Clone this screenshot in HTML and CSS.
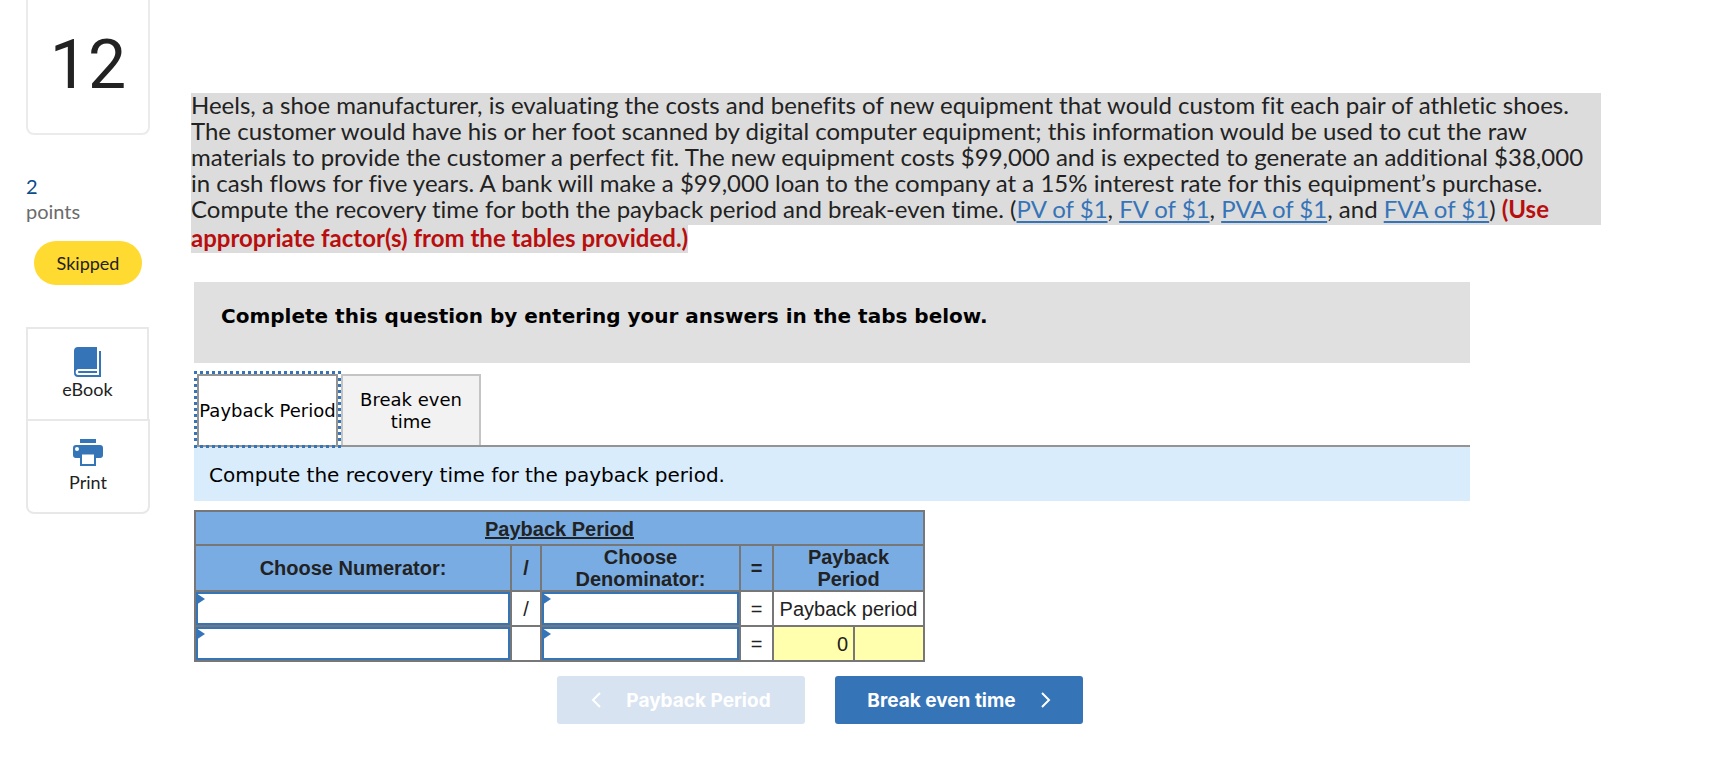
FILE: index.html
```
<!DOCTYPE html>
<html lang="en">
<head>
  <meta charset="UTF-8">
  <meta name="viewport" content="width=device-width, initial-scale=1.0">
  <title>Question 12</title>
  <link rel="stylesheet" href="styles.css">
</head>
<body>
  <div class="page">

    <!-- Sidebar -->
    <aside class="sidebar">
      <div class="question-number">12</div>
      <div class="points"><span class="points-value">2</span><span>points</span></div>
      <div class="status">Skipped</div>
      <div class="tools">
        <button type="button" class="tool tool-ebook">
          <svg width="28" height="30" viewBox="0 0 28 30" aria-hidden="true">
            <path fill="#3674b8" d="M4 0H23V22H5C3.500 22 2.500 22.600 2 23.500 1.600 24.200 1.600 26.300 2.200 27 2.800 27.800 3.500 28 5 28H25V4H27V30H4C1.500 30 0 28.500 0 26V4C0 1.500 1.500 0 4 0Z"/>
            <path fill="#3674b8" d="M5 24H23V26H5C3.600 26 3.600 24 5 24Z"/>
          </svg>
          <span>eBook</span>
        </button>
        <button type="button" class="tool tool-print">
          <svg width="30" height="27" viewBox="0 0 30 27" aria-hidden="true">
            <path fill="#3674b8" d="M7 0H23V4H7ZM3 6H27C29 6 30 7 30 9V16C30 18 29 19 27 19H23V27H7V19H3C1 19 0 18 0 16V9C0 7 1 6 3 6Z"/>
            <path fill="#fff" d="M9 15.500H21V25H9Z"/>
            <circle fill="#fff" cx="4" cy="10" r="2"/>
          </svg>
          <span>Print</span>
        </button>
      </div>
    </aside>

    <main class="content">
      <!-- Question text, selected -->
      <div class="question">
        <span class="line">Heels, a shoe manufacturer, is evaluating the costs and benefits of new equipment that would custom fit each pair of athletic shoes.</span>
        <span class="line">The customer would have his or her foot scanned by digital computer equipment; this information would be used to cut the raw</span>
        <span class="line">materials to provide the customer a perfect fit. The new equipment costs $99,000 and is expected to generate an additional $38,000</span>
        <span class="line">in cash flows for five years. A bank will make a $99,000 loan to the company at a 15% interest rate for this equipment’s purchase.</span>
        <span class="line line-links">Compute the recovery time for both the payback period and break-even time. (<a href="#">PV of $1</a>, <a href="#">FV of $1</a>, <a href="#">PVA of $1</a>, and <a href="#">FVA of $1</a>) <b>(Use</b></span>
        <span class="line line-last"><b>appropriate factor(s) from the tables provided.)</b></span>
      </div>

      <section class="answer">
        <div class="instruction">Complete this question by entering your answers in the tabs below.</div>

        <div class="tabs" role="tablist">
          <button type="button" role="tab" class="tab tab-active" aria-selected="true">Payback Period</button>
          <button type="button" role="tab" class="tab" aria-selected="false">Break even time</button>
        </div>
        <div class="prompt">Compute the recovery time for the payback period.</div>

        <table class="sheet">
          <colgroup>
            <col class="col-num"><col class="col-slash"><col class="col-den"><col class="col-eq"><col class="col-result"><col class="col-unit">
          </colgroup>
          <thead>
            <tr class="row-title"><th colspan="6"><u>Payback Period</u></th></tr>
            <tr class="row-head">
              <th>Choose Numerator:</th>
              <th>/</th>
              <th>Choose Denominator:</th>
              <th>=</th>
              <th colspan="2">Payback Period</th>
            </tr>
          </thead>
          <tbody>
            <tr>
              <td class="pick"><select aria-label="Numerator name"><option></option></select></td>
              <td>/</td>
              <td class="pick"><select aria-label="Denominator name"><option></option></select></td>
              <td>=</td>
              <td class="label" colspan="2">Payback period</td>
            </tr>
            <tr>
              <td class="pick"><select aria-label="Numerator value"><option></option></select></td>
              <td></td>
              <td class="pick"><select aria-label="Denominator value"><option></option></select></td>
              <td>=</td>
              <td class="result">0</td>
              <td class="result"></td>
            </tr>
          </tbody>
        </table>

        <div class="nav-buttons">
          <button type="button" class="nav prev" disabled>
            <svg width="10" height="16" viewBox="0 0 10 16" aria-hidden="true"><path d="M9 1L2 8L9 15" fill="none" stroke="#fff" stroke-width="2"/></svg>
            <span>Payback Period</span>
          </button>
          <button type="button" class="nav next">
            <span>Break even time</span>
            <svg width="10" height="16" viewBox="0 0 10 16" aria-hidden="true"><path d="M1 1L8 8L1 15" fill="none" stroke="#fff" stroke-width="2"/></svg>
          </button>
        </div>
      </section>
    </main>
  </div>
</body>
</html>
```
FILE: styles.css
```
* {
  box-sizing: border-box;
}

body {
  margin: 0;
  background-color: #fff;
  color: #222;
  font-family: Lato, Arial, sans-serif;
}

button {
  font-family: inherit;
  color: inherit;
}

.page {
  display: flex;
  gap: 41px;
  padding: 0 121px 0 26px;
}

/* Sidebar */
.sidebar {
  flex: 0 0 124px;
}

.question-number {
  height: 135px;
  padding-top: 24px;
  border: 2px solid #ebebeb;
  border-top: none;
  border-radius: 0 0 8px 8px;
  font-family: Roboto, Arial, sans-serif;
  font-size: 68px;
  line-height: 82px;
  text-align: center;
}

.points {
  display: flex;
  flex-direction: column;
  margin-top: 39px;
  color: #6b6b6b;
  font-size: 20px;
  line-height: 25px;
}

.points-value {
  color: #0b4a8b;
}

.status {
  width: 108px;
  margin: 17px 0 0 8px;
  border-radius: 22px;
  background-color: #ffda30;
  font-size: 18px;
  line-height: 44px;
  text-align: center;
}

.tools {
  margin-top: 42px;
}

.tool {
  display: flex;
  flex-direction: column;
  align-items: center;
  width: 124px;
  padding: 18px 0;
  border: 2px solid #e8e8e8;
  background-color: #fff;
  font-size: 18px;
  line-height: 24px;
  cursor: pointer;
}

.tool-ebook {
  width: 123px;
  border-bottom: none;
}

.tool-print {
  gap: 4px;
  border-radius: 0 0 8px 8px;
}

/* Question text */
.content {
  flex: 1;
  min-width: 0;
  padding-top: 93px;
}

.question {
  font-size: 24px;
  font-variant-ligatures: none;
  line-height: 24px;
  white-space: nowrap;
}

.line {
  display: block;
  padding-bottom: 2px;
  background-color: #dcdcdc;
}

.line-links {
  padding-bottom: 4px;
}

.line-last {
  width: fit-content;
  line-height: 26px;
}

.question a {
  color: #3674b8;
  text-underline-offset: 3px;
}

.question b {
  color: #b90e0e;
}

/* Answer area */
.answer {
  margin: 29px 131px 0 3px;
  font-family: Verdana, "DejaVu Sans", sans-serif;
}

.instruction {
  height: 81px;
  padding: 20px 27px;
  background-color: #e0e0e0;
  color: #000;
  font-size: 20px;
  font-weight: bold;
  line-height: 28px;
}

.tabs {
  display: flex;
  align-items: flex-end;
  gap: 3px;
  margin-top: 8px;
  padding: 3px 0 0 3px;
  border-bottom: 2px solid #949494;
}

.tab {
  width: 140px;
  height: 71px;
  padding: 0 10px;
  border: 2px solid #c4c4c4;
  border-bottom: none;
  background-color: #f2f2f2;
  color: #000;
  font-family: inherit;
  font-size: 18px;
  line-height: 22px;
  cursor: pointer;
}

.tab-active {
  width: 141px;
  padding: 0;
  border-color: #949494;
  background-color: #fff;
  outline: 3px dotted #3674b8;
  white-space: nowrap;
}

.prompt {
  padding: 15px 15px 13px;
  background-color: #d9ecfb;
  color: #000;
  font-size: 20px;
  line-height: 26px;
}

/* Payback table */
.sheet {
  width: 731px;
  margin-top: 9px;
  border-collapse: collapse;
  table-layout: fixed;
  font-family: "Liberation Sans", Arial, sans-serif;
  font-size: 20px;
  line-height: 22px;
}

.sheet th,
.sheet td {
  height: 35px;
  padding: 0;
  border: 2px solid #777;
  text-align: center;
}

.sheet th {
  padding: 0 5px;
  background-color: #78ace3;
}

.sheet .row-title th {
  height: 34px;
  padding-top: 2px;
}

.sheet .row-head th {
  height: 46px;
}

.col-num { width: 316px; }
.col-slash { width: 30px; }
.col-den { width: 199px; }
.col-eq { width: 33px; }
.col-result { width: 81px; }
.col-unit { width: 70px; }

.sheet .pick {
  position: relative;
}

/* blue marker over the corner of a drop-down cell */
.sheet .pick::before {
  content: "";
  position: absolute;
  top: 1px;
  left: 0;
  border: 6px solid transparent;
  border-left: 9px solid #3674b8;
  border-right: none;
  pointer-events: none;
}

.sheet select {
  display: block;
  width: 100%;
  height: 33px;
  border: 2px solid #3674b8;
  border-radius: 0;
  background-color: #fff;
  appearance: none;
}

.sheet .label {
  white-space: nowrap;
}

.sheet .result {
  padding-right: 5px;
  background-color: #ffffad;
  text-align: right;
}

/* Previous / next */
.nav-buttons {
  display: flex;
  gap: 30px;
  margin: 14px 0 0 363px;
}

.nav {
  display: flex;
  align-items: center;
  justify-content: center;
  gap: 25px;
  width: 248px;
  height: 48px;
  border: none;
  border-radius: 3px;
  background-color: #3674b8;
  color: #fff;
  font-family: Inter, sans-serif;
  font-size: 19px;
  font-weight: bold;
}

.prev {
  background-color: #d8e3f1;
}
```
